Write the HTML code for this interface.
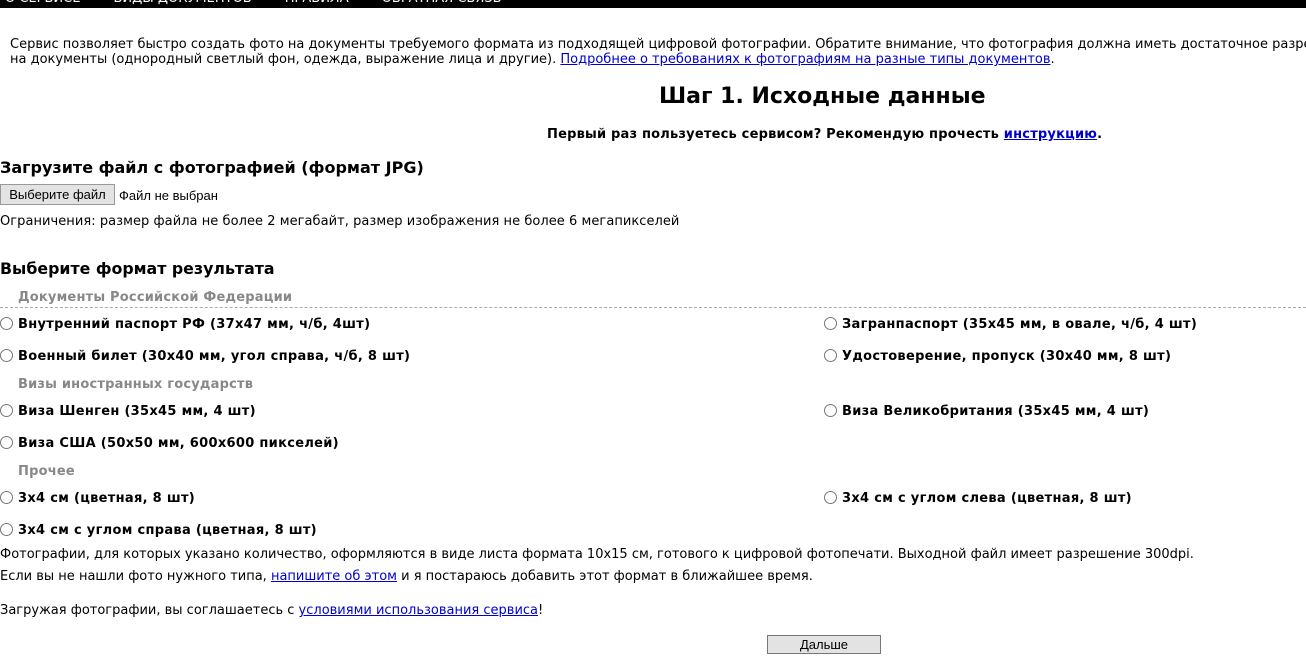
<!DOCTYPE html>
<html><head><meta charset="utf-8"><style>
html,body{margin:0;padding:0;background:#fff;width:1306px;height:659px;overflow:hidden;position:relative;font-family:"DejaVu Sans",Verdana,sans-serif;font-size:13px;color:#000}
.a{position:absolute;white-space:nowrap;line-height:15px}
a{color:#00c;text-decoration:underline}
.b{font-weight:bold}
.opt{letter-spacing:0.3px;padding-left:18px}
.r{display:inline-block;width:13px;height:13px;border:1px solid #777;border-radius:50%;box-sizing:border-box;position:absolute;left:0;top:0}
.g{color:#888;font-weight:bold;letter-spacing:0.2px}
.hr{position:absolute;left:0;width:1306px;border-top:1px dashed #aaa}
.btn{font-family:"Liberation Sans",Arial,sans-serif}
</style></head><body>
<div style="position:absolute;left:0;top:0;width:1306px;height:8px;background:#000;overflow:hidden">
<div class="a" style="color:#fff;top:-9px;left:5px;font-size:13px">О СЕРВИСЕ&nbsp;&nbsp;&nbsp;&nbsp;&nbsp;&nbsp;&nbsp;&nbsp;ВИДЫ ДОКУМЕНТОВ&nbsp;&nbsp;&nbsp;&nbsp;&nbsp;&nbsp;&nbsp;&nbsp;ПРАВИЛА&nbsp;&nbsp;&nbsp;&nbsp;&nbsp;&nbsp;&nbsp;&nbsp;ОБРАТНАЯ СВЯЗЬ</div></div>
<div class="a" style="left:10px;top:37px">Сервис позволяет быстро создать фото на документы требуемого формата из подходящей цифровой фотографии. Обратите внимание, что фотография должна иметь достаточное разрешение</div>
<div class="a" style="left:10px;top:52px">на документы (однородный светлый фон, одежда, выражение лица и другие). <a>Подробнее о требованиях к фотографиям на разные типы документов</a>.</div>
<div class="a b" style="left:659px;top:84px;font-size:22px;line-height:26px">Шаг 1. Исходные данные</div>
<div class="a b" style="left:547px;top:127px;letter-spacing:0.2px">Первый раз пользуетесь сервисом? Рекомендую прочесть <a>инструкцию</a>.</div>
<div class="a b" style="left:0;top:158px;font-size:16px;line-height:20px">Загрузите файл с фотографией (формат JPG)</div>
<div class="btn" style="position:absolute;left:0;top:184px;width:115px;height:21px;background:#e3e3e3;border:1px solid #999;box-sizing:border-box;font-size:13px;line-height:19px;text-align:center">Выберите файл</div>
<div class="a btn" style="left:119px;top:188px;font-size:13px">Файл не выбран</div>
<div class="a" style="left:0;top:214px;letter-spacing:0.05px">Ограничения: размер файла не более 2 мегабайт, размер изображения не более 6 мегапикселей</div>
<div class="a b" style="left:0;top:259px;font-size:15.8px;line-height:20px">Выберите формат результата</div>
<div class="a g" style="left:18px;top:290px">Документы Российской Федерации</div>
<div class="hr" style="top:307px"></div>
<div class="a b opt" style="left:0;top:317px"><span class="r"></span>Внутренний паспорт РФ (37x47 мм, ч/б, 4шт)</div>
<div class="a b opt" style="left:824px;top:317px"><span class="r"></span>Загранпаспорт (35x45 мм, в овале, ч/б, 4 шт)</div>
<div class="a b opt" style="left:0;top:349px"><span class="r"></span>Военный билет (30x40 мм, угол справа, ч/б, 8 шт)</div>
<div class="a b opt" style="left:824px;top:349px"><span class="r"></span>Удостоверение, пропуск (30x40 мм, 8 шт)</div>
<div class="a g" style="left:18px;top:377px">Визы иностранных государств</div>
<div class="a b opt" style="left:0;top:404px"><span class="r"></span>Виза Шенген (35x45 мм, 4 шт)</div>
<div class="a b opt" style="left:824px;top:404px"><span class="r"></span>Виза Великобритания (35x45 мм, 4 шт)</div>
<div class="a b opt" style="left:0;top:436px"><span class="r"></span>Виза США (50x50 мм, 600x600 пикселей)</div>
<div class="a g" style="left:18px;top:464px">Прочее</div>
<div class="a b opt" style="left:0;top:491px"><span class="r"></span>3x4 см (цветная, 8 шт)</div>
<div class="a b opt" style="left:824px;top:491px"><span class="r"></span>3x4 см с углом слева (цветная, 8 шт)</div>
<div class="a b opt" style="left:0;top:523px"><span class="r"></span>3x4 см с углом справа (цветная, 8 шт)</div>
<div class="a" style="left:0;top:547px">Фотографии, для которых указано количество, оформляются в виде листа формата 10x15 см, готового к цифровой фотопечати. Выходной файл имеет разрешение 300dpi.</div>
<div class="a" style="left:0;top:569px">Если вы не нашли фото нужного типа, <a>напишите об этом</a> и я постараюсь добавить этот формат в ближайшее время.</div>
<div class="a" style="left:0;top:603px">Загружая фотографии, вы соглашаетесь с <a>условиями использования сервиса</a>!</div>
<div class="btn" style="position:absolute;left:767px;top:635px;width:114px;height:19px;background:#e3e3e3;border:1px solid #777;box-sizing:border-box;font-size:13px;line-height:17px;text-align:center">Дальше</div>
</body></html>
